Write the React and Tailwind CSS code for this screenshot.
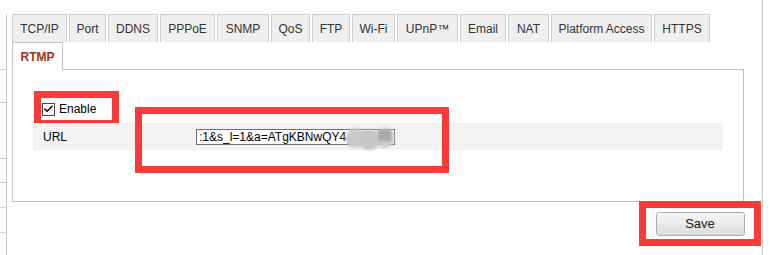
import { Check } from "lucide-react";

const tabs = [
  { label: "TCP/IP", w: "w-[55px]" },
  { label: "Port", w: "w-[37px]" },
  { label: "DDNS", w: "w-[50px]" },
  { label: "PPPoE", w: "w-[55px]" },
  { label: "SNMP", w: "w-[52px]" },
  { label: "QoS", w: "w-[39px]" },
  { label: "FTP", w: "w-[38px]" },
  { label: "Wi-Fi", w: "w-[43px]" },
  { label: "UPnP™", w: "w-[61px]" },
  { label: "Email", w: "w-[46px]" },
  { label: "NAT", w: "w-[41px]" },
  { label: "Platform Access", w: "w-[101px]" },
  { label: "HTTPS", w: "w-[56px]" },
];

const navItems = ["h-[56px]", "h-[33px]", "h-[56px]", "h-[24px]", "h-[25px]", "h-[25px]", "h-[30px]"];

function App() {
  return (
    <div className="flex h-[255px] w-[770px] overflow-hidden bg-white font-['Liberation_Sans',Arial,sans-serif] text-[12px] text-[#333]">
      {/* cut-off side menu */}
      <aside className="mt-[14px] w-[7px] shrink-0 border-r border-[#c8c8c8]">
        {navItems.map((h, i) => (
          <div key={i} className={`${h} border-b border-[#d2d2d2]`} />
        ))}
      </aside>

      <main className="w-[755px] shrink-0 pl-[5px] pt-[14px]">
        <div className="flex gap-[2px]">
          {tabs.map((tab) => (
            <div
              key={tab.label}
              className={`${tab.w} flex h-[28px] items-center justify-center border border-b-0 border-[#cdcdcd] bg-[#efefef] leading-none`}
            >
              {tab.label}
            </div>
          ))}
        </div>
        <div className="flex">
          <div className="relative z-10 -mb-px flex h-[28px] w-[51px] items-center justify-center border border-b-0 border-[#c4c4c4] bg-white font-bold text-[#a3330f]">
            RTMP
          </div>
        </div>

        <section className="h-[133px] w-[732px] border border-[#c0c0c0] bg-white px-[20px] pt-[28px]">
          <label className="ml-[8px] flex h-[22px] w-[71px] items-center gap-[4px] pl-px outline-[7px] outline-[#f93a3a] outline-solid">
            <span className="flex h-[13px] w-[13px] items-center justify-center border border-[#444] bg-white">
              <Check size={12} strokeWidth={3.5} className="text-[#111]" />
            </span>
            <span className="text-[12px] text-black">Enable</span>
          </label>

          <div className="relative mt-[3px] flex h-[27px] items-center bg-[#f3f3f3] pl-[10px]">
            <span className="w-[153px] text-black">URL</span>
            <div className="relative h-[16px] w-[199px] overflow-hidden border border-[#6f6f6f] bg-white pl-[2px] text-[12px] leading-[14px] whitespace-nowrap text-black">
              :1&amp;s_l=1&amp;a=ATgKBNwQY4
            </div>
            {/* blurred part of the url */}
            <div className="absolute top-[5px] left-[312px] h-[20px] w-[20px] rounded-full bg-[#c9c9c9] blur-[1.5px]" />
            <div className="absolute top-[6px] left-[325px] h-[21px] w-[22px] rounded-full bg-[#c6c6c6] blur-[1.5px]" />
            <div className="absolute top-[5px] left-[342px] h-[20px] w-[20px] rounded-full bg-[#cbcbcb] blur-[1.5px]" />
            <div className="absolute top-[7px] left-[345px] h-[11px] w-[13px] bg-[#a9a9a9] blur-[1px]" />
            {/* annotation */}
            <div className="pointer-events-none absolute top-[-16px] left-[102px] h-[66px] w-[314px] border-[7px] border-[#f93a3a]" />
          </div>
        </section>

        <div className="flex justify-end pr-[8px] pt-[6px]">
          <div className="flex h-[31px] w-[108px] items-center justify-center outline-[7px] outline-[#f93a3a] outline-solid">
            <button
              type="button"
              className="h-[24px] w-[89px] rounded-[3px] border border-[#ababab] bg-gradient-to-b from-[#f7f7f7] to-[#dcdcdc] text-[13px] text-[#222]"
            >
              Save
            </button>
          </div>
        </div>
      </main>

      <div className="flex-1 border-l border-[#c8c8c8]" />
    </div>
  );
}

export default App;
